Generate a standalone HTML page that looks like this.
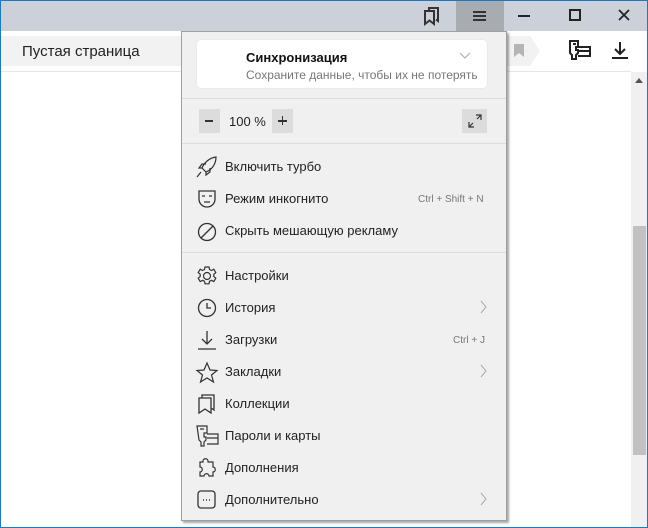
<!DOCTYPE html><html><head><meta charset="utf-8"><style>
*{margin:0;padding:0;box-sizing:border-box}
body{width:648px;height:528px;overflow:hidden;position:relative;background:#fff;font-family:"Segoe UI","Liberation Sans","DejaVu Sans",sans-serif;}
.a{position:absolute}
.t{font-size:13px;color:#222;}
.m{margin-top:2px}
svg{position:absolute;overflow:visible}
</style></head><body>
<div class="a" style="left:0;top:0;width:648px;height:31px;background:#ccd1d9"></div>
<div class="a" style="left:456px;top:0;width:48px;height:31px;background:#a8acb1"></div>
<div class="a" style="left:0;top:0;width:648px;height:1px;background:#1a7ac8"></div>
<div class="a" style="left:0;top:0;width:1px;height:528px;background:#1a7ac8"></div>
<div class="a" style="left:647px;top:0;width:1px;height:528px;background:#1a7ac8"></div>
<div class="a" style="left:0;top:527px;width:648px;height:1px;background:#1a7ac8"></div>
<svg style="left:420px;top:6px" width="24" height="20"><path d="M5 5h9v13l-4.5-3.5L5 18z M9 5V2h9v13l-2-1.5" fill="none" stroke="#333" stroke-width="2"/></svg>
<svg style="left:472px;top:9px" width="16" height="14"><path d="M1 3h13M1 7h13M1 11h13" stroke="#333" stroke-width="2"/></svg>
<div class="a" style="left:518px;top:15px;width:12px;height:2px;background:#222"></div>
<div class="a" style="left:569px;top:9px;width:12px;height:12px;border:2px solid #222"></div>
<svg style="left:618px;top:9px" width="12" height="12"><path d="M1 1L11 11M11 1L1 11" stroke="#222" stroke-width="1.8"/></svg>
<div class="a" style="left:1px;top:36px;width:530px;height:30px;background:#f2f2f2"></div>
<svg style="left:530px;top:36px" width="12" height="30"><path d="M0 0L10 15L0 30z" fill="#f2f2f2"/></svg>
<div class="a t" style="left:22px;top:43px;font-size:15px;color:#222">Пустая страница</div>
<svg style="left:514px;top:44px" width="10" height="14"><path d="M0 0h10v13l-5-4l-5 4z" fill="#b5b5b5"/></svg>
<svg style="left:568px;top:39px" width="24" height="24"><path d="M2 2h8v6h-2v3h2v3l-2 2v4h-4v-4l-2-2zM5 5h3M10 8h12v9h-12M10 12h12" fill="none" stroke="#222" stroke-width="2"/></svg>
<svg style="left:611px;top:41px" width="18" height="18"><path d="M9 1v12M4 8l5 5l5-5M1 17h16" fill="none" stroke="#222" stroke-width="2"/></svg>
<div class="a" style="left:1px;top:71px;width:630px;height:1px;background:#e6e6e6"></div>
<div class="a" style="left:631px;top:72px;width:16px;height:455px;background:#f0f0f0"></div>
<div class="a" style="left:633px;top:226px;width:13px;height:229px;background:#c1c1c1"></div>
<svg style="left:635px;top:78px" width="8" height="5"><path d="M0 5L4 0L8 5z" fill="#555"/></svg>
<div class="a" style="left:181px;top:31px;width:326px;height:490px;background:#f0f0f0;border:1px solid #a0a0a0;box-shadow:2px 2px 2px rgba(0,0,0,.35)"></div>
<div class="a" style="left:197px;top:40px;width:290px;height:48px;background:#fff;border-radius:4px;box-shadow:0 0 1px #ccc"></div>
<div class="a" style="left:246px;top:50px;font-size:13px;font-weight:bold;color:#111">Синхронизация</div>
<div class="a" style="left:246px;top:68px;font-size:12px;color:#777">Сохраните данные, чтобы их не потерять</div>
<svg style="left:460px;top:53px" width="10" height="6"><path d="M0 0L5 5L10 0" fill="none" stroke="#aaa"/></svg>
<div class="a" style="left:182px;top:98px;width:324px;height:1px;background:#dcdcdc"></div>
<div class="a" style="left:199px;top:109px;width:21px;height:24px;background:#dcdcdc"></div>
<div class="a" style="left:205px;top:120px;width:8px;height:1.5px;background:#333"></div>
<div class="a" style="left:229px;top:114px;font-size:13px;color:#222">100 %</div>
<div class="a" style="left:272px;top:109px;width:21px;height:24px;background:#dcdcdc"></div>
<div class="a" style="left:278px;top:120px;width:9px;height:1.5px;background:#333"></div>
<div class="a" style="left:281.75px;top:116px;width:1.5px;height:9px;background:#333"></div>
<div class="a" style="left:462px;top:109px;width:25px;height:24px;background:#dcdcdc"></div>
<svg style="left:468px;top:114px" width="14" height="14"><path d="M8 1h5v5M13 1L9 5M1 8v5h5M1 13l4-4" fill="none" stroke="#333" stroke-width="1.2"/></svg>
<div class="a" style="left:182px;top:143px;width:324px;height:1px;background:#dcdcdc"></div>
<div class="a" style="left:182px;top:252px;width:324px;height:1px;background:#dcdcdc"></div>
<div class="a t" style="left:225px;top:159px">Включить турбо</div>
<div class="a t" style="left:225px;top:191px">Режим инкогнито</div>
<div class="a" style="left:418px;top:194px;font-size:10px;color:#777">Ctrl + Shift + N</div>
<div class="a t" style="left:225px;top:223px">Скрыть мешающую рекламу</div>
<div class="a t" style="left:225px;top:268px">Настройки</div>
<div class="a t" style="left:225px;top:300px">История</div>
<div class="a t" style="left:225px;top:332px">Загрузки</div>
<div class="a" style="left:453px;top:335px;font-size:10px;color:#777">Ctrl + J</div>
<div class="a t" style="left:225px;top:364px">Закладки</div>
<div class="a t" style="left:225px;top:396px">Коллекции</div>
<div class="a t" style="left:225px;top:428px">Пароли и карты</div>
<div class="a t" style="left:225px;top:460px">Дополнения</div>
<div class="a t" style="left:225px;top:492px">Дополнительно</div>
<svg style="left:481px;top:301px" width="6" height="12"><path d="M0 0L5 6L0 12" fill="none" stroke="#aaa"/></svg>
<svg style="left:481px;top:365px" width="6" height="12"><path d="M0 0L5 6L0 12" fill="none" stroke="#aaa"/></svg>
<svg style="left:481px;top:493px" width="6" height="12"><path d="M0 0L5 6L0 12" fill="none" stroke="#aaa"/></svg>
<svg style="left:196px;top:156px" width="22" height="22" fill="none" stroke="#333" stroke-width="1.2"><path d="M20 1C13 2 8 7 6 12l4 4c5-2 10-7 10-15zM6 12l-3 0 3-4h4M10 16v3l4-3v-4M5 16l-4 5"/></svg>
<svg style="left:198px;top:190px" width="18" height="18" fill="none" stroke="#333" stroke-width="1.3"><path d="M1 1h16v8c0 5-4 8-8 8s-8-3-8-8zM4 6h3M11 6h3M6 12h6"/></svg>
<svg style="left:197px;top:222px" width="20" height="20" fill="none" stroke="#333" stroke-width="1.3"><circle cx="10" cy="10" r="8.5"/><path d="M4 16L16 4"/></svg>
<svg style="left:197px;top:266px" width="20" height="20" fill="none" stroke="#333" stroke-width="1.2"><circle cx="10" cy="10" r="3.5"/><path d="M8 1h4l.5 2.5 2 1 2.3-1.3 2 3.4-2 1.7v2.2l2 1.7-2 3.4-2.3-1.3-2 1-.5 2.5h-4l-.5-2.5-2-1-2.3 1.3-2-3.4 2-1.7v-2.2l-2-1.7 2-3.4 2.3 1.3 2-1z"/></svg>
<svg style="left:197px;top:298px" width="20" height="20" fill="none" stroke="#333" stroke-width="1.3"><circle cx="10" cy="10" r="8.5"/><path d="M10 5v5h4"/></svg>
<svg style="left:197px;top:330px" width="20" height="20" fill="none" stroke="#333" stroke-width="1.3"><path d="M10 1v13M5 9l5 5l5-5M1 19h18"/></svg>
<svg style="left:196px;top:362px" width="22" height="22" fill="none" stroke="#333" stroke-width="1.2"><path d="M11 1l3 7 7 .5-5.5 4.5 2 7-6.5-4-6.5 4 2-7L1 8.5 8 8z"/></svg>
<svg style="left:198px;top:394px" width="20" height="20" fill="none" stroke="#333" stroke-width="1.3"><path d="M1 4h12v15l-6-4-6 4zM4 4V1h12v15l-3-2"/></svg>
<svg style="left:196px;top:425px" width="24" height="22" fill="none" stroke="#333" stroke-width="1.2"><path d="M1 1h10v7h-3v4h2v3l-2 2v4h-3v-4l-2-2zM4 4h4M11 9h11v10h-11M11 13h11"/></svg>
<svg style="left:197px;top:458px" width="20" height="20" fill="none" stroke="#333" stroke-width="1.2"><path d="M6 3c0-3 5-3 5 0v1h5v5c3 0 3 5 0 5v4h-4c0-3-5-3-5 0H3v-4c3 0 3-5 0-5V4h3z"/></svg>
<svg style="left:197px;top:490px" width="20" height="20" fill="none" stroke="#333" stroke-width="1.3"><rect x="1" y="1" width="17" height="17" rx="3"/><path d="M6 10h1M9 10h1M12 10h1" stroke-width="1.6"/></svg>
</body></html>
